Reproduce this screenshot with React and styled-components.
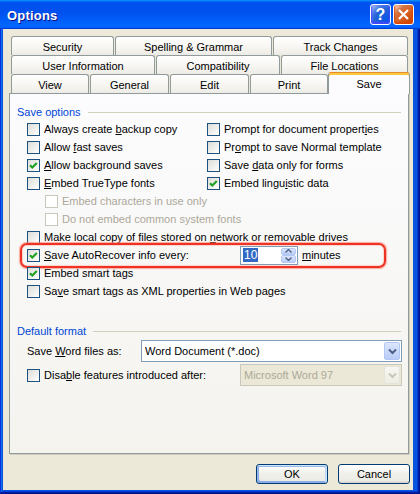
import React from "react";
import styled, { createGlobalStyle } from "styled-components";

const Global = createGlobalStyle`
  html, body { margin: 0; padding: 0; background: #ECE9D8; }
  body { font-family: "Liberation Sans", Arial, sans-serif; font-size: 11px; color: #000; }
  * { box-sizing: border-box; }
  u { text-decoration: underline; text-underline-offset: 1px; }
`;

const Window = styled.div`
  width: 420px;
  height: 494px;
  display: flex;
  flex-direction: column;
  background: #0855dd;
  box-shadow: inset -1px -1px #00138c, inset 1px 1px #0831d9, inset -2px -2px #001ea0,
    inset 2px 2px #166aee, inset -3px -3px #003bda, inset 3px 3px #0855dd;
`;

const TitleBar = styled.div`
  height: 29px;
  flex: none;
  display: flex;
  align-items: center;
  gap: 2px;
  padding: 0 6px 0 7px;
  background: linear-gradient(180deg, #0997ff, #0053ee 8%, #0050ee 40%, #0066ff 88%, #0066ff 93%, #005bff 95%, #003dd7 96%, #003dd7);
`;

const TitleText = styled.div`
  flex: 1;
  color: #fff;
  font-family: "Liberation Sans", Arial, sans-serif;
  font-weight: bold;
  font-size: 13px;
  letter-spacing: 0.2px;
  text-shadow: 1px 1px #0f1089;
  margin-top: 1px;
`;

const CaptionButton = styled.div`
  width: 21px;
  height: 21px;
  border: 1px solid #fff;
  border-radius: 3px;
  display: flex;
  align-items: center;
  justify-content: center;
  color: #fff;
  font-weight: bold;
  font-size: 16px;
  font-family: "Liberation Sans", Arial, sans-serif;
  background: ${(p) =>
    p.$close
      ? "radial-gradient(circle at 90% 90%, #cc4600 0%, #dc6527 55%, #cd7546 70%, #ffccb2 90%, #fff 100%)"
      : "radial-gradient(circle at 90% 90%, #0054e9 0%, #2263d5 55%, #4479e4 70%, #a3bbec 90%, #fff 100%)"};
  box-shadow: inset 0 -1px 2px 1px ${(p) => (p.$close ? "#da4600" : "#4646ff")};
`;

const Client = styled.div`
  flex: 1;
  margin: 0 7px 4px 3px;
  background: #ece9d8;
  padding: 7px 4px 6px 6px;
  display: flex;
  flex-direction: column;
`;

const TabStrip = styled.div`
  padding-left: 2px;
  display: flex;
  flex-direction: column;
  flex: none;
`;

const TabRow = styled.div`
  display: flex;
  gap: 1px;
  height: 19px;
`;

const Tab = styled.div`
  width: ${(p) => (p.$selected ? p.$w + 3 : p.$w)}px;
  height: ${(p) => (p.$selected ? 22 : 19)}px;
  margin: ${(p) => (p.$selected ? "-2px -2px -1px -1px" : "0")};
  position: relative;
  z-index: ${(p) => (p.$selected ? 2 : 0)};
  border: 1px solid #919b9c;
  border-bottom: none;
  border-top-color: ${(p) => (p.$selected ? "#e68b2c" : "#919b9c")};
  border-radius: 3px 3px 0 0;
  background: ${(p) =>
    p.$selected ? "#fcfcfe" : "linear-gradient(180deg, #ffffff, #f6f5f1 60%, #ecebe5)"};
  box-shadow: ${(p) => (p.$selected ? "inset 0 2px #ffc73c" : "none")};
  display: flex;
  align-items: center;
  justify-content: center;
  padding-top: ${(p) => (p.$selected ? 0 : 2)}px;
  white-space: nowrap;
`;

const Panel = styled.div`
  flex: 1;
  border: 1px solid #919b9c;
  background: linear-gradient(180deg, #fcfcfe, #f4f3ee);
  box-shadow: 1px 1px #d0cebf;
  padding: 11px 7px 0 7px;
  display: flex;
  flex-direction: column;
  position: relative;
  z-index: 1;
`;

const GroupHeader = styled.div`
  display: flex;
  align-items: center;
  height: 14px;
  color: #0046d5;
  margin-top: ${(p) => p.$mt || 0}px;
  white-space: nowrap;
`;

const HeaderLine = styled.div`
  flex: 1;
  height: 1px;
  background: #d0d0bf;
  margin-left: 7px;
`;

const Options = styled.div`
  margin-left: 10px;
  margin-top: 1px;
  display: flex;
  flex-direction: column;
`;

const Grid2 = styled.div`
  display: grid;
  grid-template-columns: 180px 1fr;
`;

const Row = styled.div`
  display: flex;
  align-items: center;
  height: ${(p) => p.$h || 18}px;
  padding-left: ${(p) => p.$indent || 0}px;
  margin-top: ${(p) => p.$mt || 0}px;
  position: relative;
  white-space: nowrap;
`;

const Box = styled.span`
  width: 13px;
  height: 13px;
  flex: none;
  border: 1px solid ${(p) => (p.$disabled ? "#cac8bb" : "#1c5180")};
  background: ${(p) => (p.$disabled ? "#ffffff" : "linear-gradient(135deg, #dcdcd7, #ffffff)")};
  display: flex;
  align-items: center;
  justify-content: center;
`;

const Label = styled.span`
  margin-left: 4px;
  color: ${(p) => (p.$disabled ? "#aca899" : "#000")};
  width: ${(p) => (p.$w ? `${p.$w}px` : "auto")};
  flex: none;
`;

const PlainLabel = styled.span`
  width: ${(p) => p.$w}px;
  flex: none;
`;

const Highlight = styled.div`
  position: absolute;
  left: -7px;
  top: -3px;
  width: 366px;
  height: 25px;
  border: 2px solid #ee3224;
  border-radius: 7px;
  box-shadow: 0 0 1px 0.5px rgba(255, 120, 100, 0.6), inset 0 0 1px 0.5px rgba(255, 120, 100, 0.5);
  pointer-events: none;
`;

const SpinBox = styled.div`
  width: 58px;
  height: 19px;
  border: 1px solid #7f9db9;
  background: #fff;
  display: flex;
  align-items: center;
  padding: 1px;
`;

const SpinText = styled.div`
  flex: 1;
  padding-left: 1px;
  display: flex;
  align-items: center;
`;

const Selected = styled.span`
  background: #316ac5;
  color: #fff;
  line-height: 14px;
  padding: 0 1px;
  font-size: 12px;
`;

const SpinButtons = styled.div`
  width: 15px;
  height: 100%;
  display: flex;
  flex-direction: column;
`;

const SpinHalf = styled.div`
  flex: 1;
  border: 1px solid #b4c8f6;
  border-radius: 2px;
  background: linear-gradient(180deg, #dce6fc, #bccdf7);
  display: flex;
  align-items: center;
  justify-content: center;
`;

const After = styled.span`
  margin-left: 4px;
`;

const Combo = styled.div`
  width: ${(p) => p.$w}px;
  height: 22px;
  border: 1px solid ${(p) => (p.$disabled ? "#c9c7ba" : "#7f9db9")};
  background: ${(p) => (p.$disabled ? "#ebe8d7" : "#fff")};
  color: ${(p) => (p.$disabled ? "#aca899" : "#000")};
  display: flex;
  align-items: stretch;
  padding: 1px;
  flex: none;
`;

const ComboText = styled.div`
  flex: 1;
  display: flex;
  align-items: center;
  padding-left: 2px;
  font-size: 11px;
`;

const ComboButton = styled.div`
  width: 16px;
  border: 1px solid ${(p) => (p.$disabled ? "#e6e4d8" : "#b4c8f6")};
  border-radius: 2px;
  background: ${(p) =>
    p.$disabled ? "linear-gradient(180deg, #f7f6f1, #eeede5)" : "linear-gradient(180deg, #dce6fc, #b9cbf6)"};
  display: flex;
  align-items: center;
  justify-content: center;
`;

const Footer = styled.div`
  flex: none;
  display: flex;
  justify-content: flex-end;
  gap: 10px;
  margin-top: 10px;
  margin-right: -1px;
`;

const Button = styled.button`
  width: 72px;
  height: 20px;
  border: 1px solid #003c74;
  border-radius: 3px;
  font-family: "Liberation Sans", Arial, sans-serif;
  font-size: 11px;
  color: #000;
  padding: 0;
  background: linear-gradient(180deg, #ffffff, #f0f0ea 50%, #ecebe6 86%, #d6d0c5);
  box-shadow: ${(p) =>
    p.$default
      ? "inset -1px 1px #cee7ff, inset 1px 2px #98b8ea, inset -2px 2px #bcd4f6, inset 1px -1px #89ade4, inset 2px -2px #89ade4"
      : "none"};
`;

const CheckMark = () => (
  <svg width="11" height="11" viewBox="0 0 11 11">
    <path d="M2 5.2 L4.3 7.5 L8.8 3" fill="none" stroke="#21a121" strokeWidth="2.2" />
  </svg>
);

const Check = ({ checked, disabled, children, w }) => (
  <>
    <Box $disabled={disabled}>{checked && <CheckMark />}</Box>
    <Label $disabled={disabled} $w={w}>
      {children}
    </Label>
  </>
);

const Chevron = ({ color }) => (
  <svg width="9" height="7" viewBox="0 0 9 7">
    <path d="M1 1.5 L4.5 5 L8 1.5" fill="none" stroke={color} strokeWidth="2" />
  </svg>
);

const SmallArrow = ({ up }) => (
  <svg width="7" height="4" viewBox="0 0 7 4">
    <path d={up ? "M0.5 3.5 L3.5 0.5 L6.5 3.5" : "M0.5 0.5 L3.5 3.5 L6.5 0.5"} fill="none" stroke="#4d6185" strokeWidth="1.4" />
  </svg>
);

const rows = [
  [
    ["Security", 103],
    ["Spelling & Grammar", 157],
    ["Track Changes", 135],
  ],
  [
    ["User Information", 144],
    ["Compatibility", 124],
    ["File Locations", 127],
  ],
  [
    ["View", 78],
    ["General", 79],
    ["Edit", 79],
    ["Print", 78],
    ["Save", 79, true],
  ],
];

export default function App() {
  return (
    <>
      <Global />
      <Window>
        <TitleBar>
          <TitleText>Options</TitleText>
          <CaptionButton>?</CaptionButton>
          <CaptionButton $close>
            <svg width="11" height="11" viewBox="0 0 11 11">
              <path d="M1 1 L10 10 M10 1 L1 10" stroke="#fff" strokeWidth="2.2" />
            </svg>
          </CaptionButton>
        </TitleBar>
        <Client>
          <TabStrip>
            {rows.map((r, i) => (
              <TabRow key={i}>
                {r.map(([t, w, sel]) => (
                  <Tab key={t} $w={w} $selected={sel}>
                    {t}
                  </Tab>
                ))}
              </TabRow>
            ))}
          </TabStrip>
          <Panel>
            <GroupHeader>
              Save options
              <HeaderLine />
            </GroupHeader>
            <Options>
              <Grid2>
                <Row>
                  <Check>
                    Always create <u>b</u>ackup copy
                  </Check>
                </Row>
                <Row>
                  <Check>
                    Prompt for document propert<u>i</u>es
                  </Check>
                </Row>
                <Row>
                  <Check>
                    Allow <u>f</u>ast saves
                  </Check>
                </Row>
                <Row>
                  <Check>
                    Pr<u>o</u>mpt to save Normal template
                  </Check>
                </Row>
                <Row>
                  <Check checked>
                    <u>A</u>llow background saves
                  </Check>
                </Row>
                <Row>
                  <Check>
                    Save <u>d</u>ata only for forms
                  </Check>
                </Row>
                <Row>
                  <Check>
                    <u>E</u>mbed TrueType fonts
                  </Check>
                </Row>
                <Row>
                  <Check checked>
                    Embed lingu<u>i</u>stic data
                  </Check>
                </Row>
              </Grid2>
              <Row $indent={18}>
                <Check disabled>Embed characters in use only</Check>
              </Row>
              <Row $indent={18}>
                <Check disabled>Do not embed common system fonts</Check>
              </Row>
              <Row>
                <Check>
                  Make local copy of files stored on <u>n</u>etwork or removable drives
                </Check>
              </Row>
              <Row>
                <Check checked w={196}>
                  <u>S</u>ave AutoRecover info every:
                </Check>
                <SpinBox>
                  <SpinText>
                    <Selected>10</Selected>
                  </SpinText>
                  <SpinButtons>
                    <SpinHalf>
                      <SmallArrow up />
                    </SpinHalf>
                    <SpinHalf>
                      <SmallArrow />
                    </SpinHalf>
                  </SpinButtons>
                </SpinBox>
                <After>
                  <u>m</u>inutes
                </After>
                <Highlight />
              </Row>
              <Row>
                <Check checked>Embed smart tags</Check>
              </Row>
              <Row>
                <Check>
                  Sa<u>v</u>e smart tags as XML properties in Web pages
                </Check>
              </Row>
            </Options>
            <GroupHeader $mt={24}>
              Default format
              <HeaderLine />
            </GroupHeader>
            <Options>
              <Row $h={22} $mt={1}>
                <PlainLabel $w={114}>
                  Save <u>W</u>ord files as:
                </PlainLabel>
                <Combo $w={261}>
                  <ComboText>Word Document (*.doc)</ComboText>
                  <ComboButton>
                    <Chevron color="#4d6185" />
                  </ComboButton>
                </Combo>
              </Row>
              <Row $h={22} $mt={2}>
                <Check w={196}>
                  Disa<u>b</u>le features introduced after:
                </Check>
                <Combo $w={162} $disabled>
                  <ComboText>Microsoft Word 97</ComboText>
                  <ComboButton $disabled>
                    <Chevron color="#c9c7ba" />
                  </ComboButton>
                </Combo>
              </Row>
            </Options>
          </Panel>
          <Footer>
            <Button $default>OK</Button>
            <Button>Cancel</Button>
          </Footer>
        </Client>
      </Window>
    </>
  );
}
